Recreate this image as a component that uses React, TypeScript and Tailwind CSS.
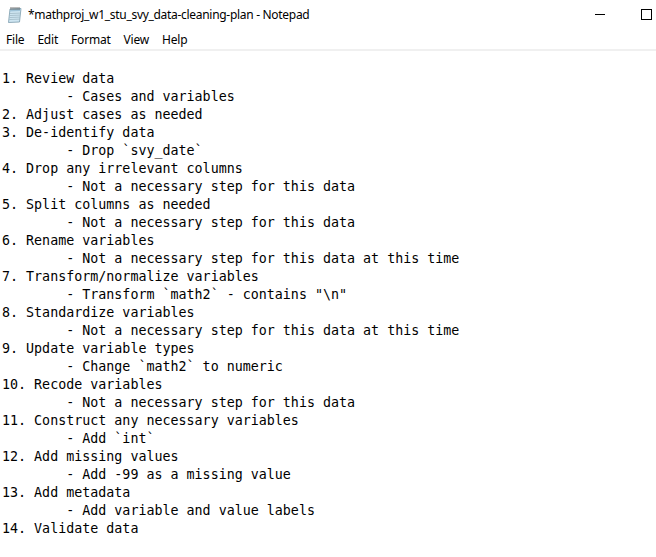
import React from "react";

const lines: string[] = [
  "1. Review data",
  "        - Cases and variables",
  "2. Adjust cases as needed",
  "3. De-identify data",
  "        - Drop `svy_date`",
  "4. Drop any irrelevant columns",
  "        - Not a necessary step for this data",
  "5. Split columns as needed",
  "        - Not a necessary step for this data",
  "6. Rename variables",
  "        - Not a necessary step for this data at this time",
  "7. Transform/normalize variables",
  '        - Transform `math2` - contains "\\n"',
  "8. Standardize variables",
  "        - Not a necessary step for this data at this time",
  "9. Update variable types",
  "        - Change `math2` to numeric",
  "10. Recode variables",
  "        - Not a necessary step for this data",
  "11. Construct any necessary variables",
  "        - Add `int`",
  "12. Add missing values",
  "        - Add -99 as a missing value",
  "13. Add metadata",
  "        - Add variable and value labels",
  "14. Validate data",
];

function NotepadIcon() {
  return (
    <svg width="16" height="17" viewBox="0 0 16 17">
      <path d="M3 3 L14 2.5 L12.5 16 L1.5 16.5 Z" fill="#cfe6f2" stroke="#7a9aab" strokeWidth="0.8" />
      <path d="M3.2 3.2 L13.6 2.8 L13.3 5 L3 5.4 Z" fill="#9fc3d8" />
      <g stroke="#8fa7b3" strokeWidth="0.6">
        <line x1="3" y1="7.5" x2="13" y2="7.1" />
        <line x1="2.8" y1="9.5" x2="12.8" y2="9.1" />
        <line x1="2.6" y1="11.5" x2="12.6" y2="11.1" />
        <line x1="2.4" y1="13.5" x2="12.4" y2="13.1" />
      </g>
      <g stroke="#555" strokeWidth="0.8" fill="none">
        <path d="M4 4 L4 1" />
        <path d="M6 4 L6 1" />
        <path d="M8 4 L8 1" />
        <path d="M10 4 L10 1" />
        <path d="M12 4 L12 1" />
      </g>
    </svg>
  );
}

export default function App() {
  return (
    <div className="w-[656px] h-[557px] bg-white overflow-hidden flex flex-col">
      <div className="h-[30px] flex items-center shrink-0">
        <div className="ml-[7px] mt-[-1px] w-[16px] h-[17px]">
          <NotepadIcon />
        </div>
        <div
          className="ml-[5px] text-[12px] tracking-[-0.3px] text-black leading-none"
          style={{ fontFamily: '"Noto Sans", sans-serif' }}
        >
          *mathproj_w1_stu_svy_data-cleaning-plan - Notepad
        </div>
        <div className="flex-1" />
        <div className="w-[10px] h-[1px] bg-black mr-[36px] mt-[-2px]" />
        <div className="w-[11px] h-[11px] border border-black mr-[4px] mt-[-2px]" />
      </div>
      <div
        className="h-[19px] flex items-center text-[12px] tracking-[-0.2px] text-black shrink-0"
        style={{ fontFamily: '"Noto Sans", sans-serif' }}
      >
        <span className="ml-[6px]">File</span>
        <span className="ml-[13px]">Edit</span>
        <span className="ml-[13px]">Format</span>
        <span className="ml-[13px]">View</span>
        <span className="ml-[13px]">Help</span>
      </div>
      <div className="h-[2px] bg-[#f0f0f0] shrink-0" />
      <div
        className="pt-[19px] pl-[2px] text-black text-[13.33px] leading-[18px] whitespace-pre"
        style={{ fontFamily: '"DejaVu Sans Mono", monospace' }}
      >
        {lines.map((l, i) => (
          <div key={i} className="h-[18px]">
            {l}
          </div>
        ))}
      </div>
    </div>
  );
}
